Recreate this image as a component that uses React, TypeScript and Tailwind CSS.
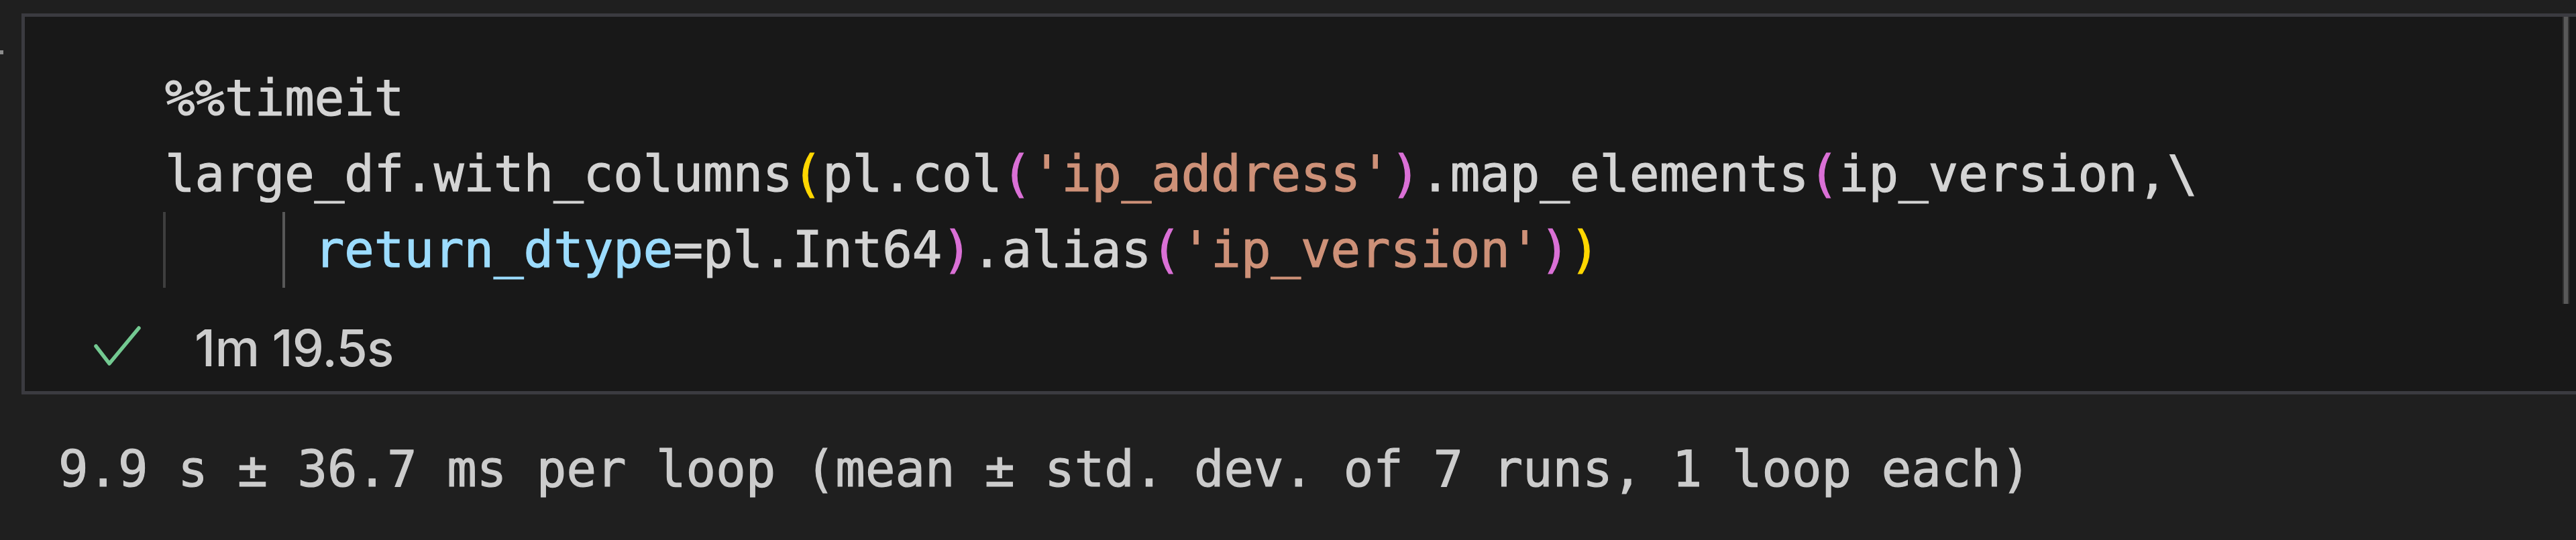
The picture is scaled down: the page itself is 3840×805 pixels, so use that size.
import React from "react";

const mono = {
  fontFamily: '"DejaVu Sans Mono", "Liberation Mono", monospace',
  WebkitTextStroke: "1.2px currentColor",
} as React.CSSProperties;

const Y = "text-[#ffd700]";
const M = "text-[#da70d6]";
const S = "text-[#ce9178]";
const P = "text-[#9cdcfe]";

export default function App() {
  return (
    <div className="w-[3840px] h-[805px] bg-[#1f1f1f] overflow-hidden flex flex-col">
      <div className="flex pt-[20px]">
        <div className="w-[32px] shrink-0">
          <div className="mt-[55px] w-[5px] h-[6px] bg-[#8c8c8c]" />
        </div>
        <div className="relative flex-1 h-[568px] bg-[#181818] border-l-[5px] border-t-[5px] border-b-[5px] border-[#3b3b40] flex flex-col">
          <div
            className="pt-[65px] pl-[209px] text-[74px] text-[#d4d4d4] whitespace-pre"
            style={mono}
          >
            <div className="h-[113px] leading-[113px]">%%timeit</div>
            <div className="h-[113px] leading-[113px]">
              large_df.with_columns<span className={Y}>(</span>pl.col
              <span className={M}>(</span>
              <span className={S}>'ip_address'</span>
              <span className={M}>)</span>.map_elements
              <span className={M}>(</span>ip_version,\
            </div>
            <div className="h-[113px] leading-[113px] flex">
              <span className="inline-block w-[4ch] h-[113px] -ml-[3px] border-l-[4px] border-[#3e3e3e]" />
              <span className="inline-block w-[calc(1ch+3px)] h-[113px] border-l-[4px] border-[#585858]" />
              <span>
                <span className={P}>return_dtype</span>=pl.Int64
                <span className={M}>)</span>.alias<span className={M}>(</span>
                <span className={S}>'ip_version'</span>
                <span className={M}>)</span>
                <span className={Y}>)</span>
              </span>
            </div>
          </div>
          <div className="mt-[42px] h-[94px] flex items-center pl-[103px]">
            <svg width="70" height="60" viewBox="0 0 70 60" className="shrink-0 -mt-[4px]">
              <polyline
                points="3,30 23,56 67,3"
                fill="none"
                stroke="#73c991"
                strokeWidth="5.5"
                strokeLinecap="round"
                strokeLinejoin="round"
              />
            </svg>
            <span
              className="ml-[80px] text-[75px] leading-none text-[#cccccc] font-medium tracking-[-0.01em]"
              style={{ fontFamily: 'Inter, "Noto Sans", sans-serif' }}
            >
              1m 19.5s
            </span>
          </div>
          <div className="absolute right-[10px] top-0 w-[10px] h-[428px] bg-[#595959] border-x-[2px] border-[#333333]" />
        </div>
      </div>
      <div
        className="mt-[55px] pl-[87px] h-[113px] leading-[113px] text-[74px] text-[#cccccc] whitespace-pre"
        style={mono}
      >
        9.9 s ± 36.7 ms per loop (mean ± std. dev. of 7 runs, 1 loop each)
      </div>
    </div>
  );
}
